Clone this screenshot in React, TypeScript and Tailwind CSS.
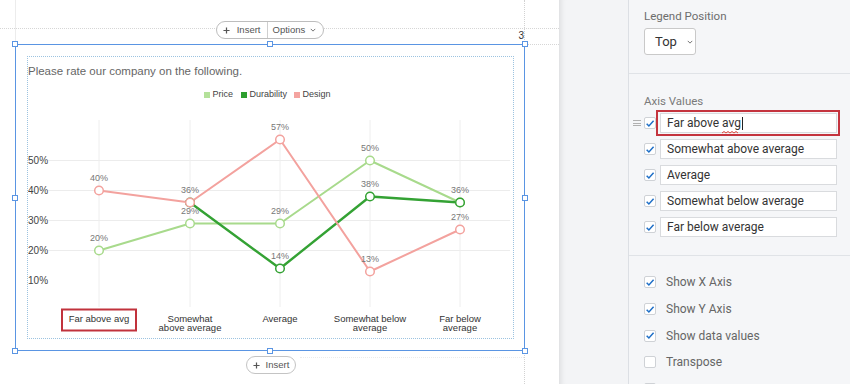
import * as React from "react";

// kolory serii
const PRICE = "#a8da8c";
const DUR = "#34a234";
const DESIGN = "#f3a29e";

const XS = [99, 190, 280, 370, 460];
const yOf = (v: number) => 310.5 - 3 * v;

const SERIES: { color: string; width: number; values: (number | null)[] }[] = [
  { color: PRICE, width: 2, values: [20, 29, 29, 50, 36] },
  { color: DUR, width: 2.4, values: [null, 36, 14, 38, 36] },
  { color: DESIGN, width: 2, values: [40, 36, 57, 13, 27] },
];

const LABELS: [number, number][] = [
  [99, 40], [99, 20],
  [190, 36], [190, 29],
  [280, 57], [280, 29], [280, 14],
  [370, 50], [370, 38], [370, 13],
  [460, 36], [460, 27],
];

const XLAB: string[][] = [
  ["Far above avg"],
  ["Somewhat", "above average"],
  ["Average"],
  ["Somewhat below", "average"],
  ["Far below", "average"],
];

function Chart() {
  return (
    <svg width={485} height={232} viewBox="28 105 485 232" className="block">
      {/* siatka */}
      {[50, 40, 30, 20].map((v) => (
        <line key={v} x1={48} x2={510} y1={yOf(v)} y2={yOf(v)} stroke="#ececec" strokeWidth={1} />
      ))}
      {XS.map((x) => (
        <line key={x} x1={x} x2={x} y1={120} y2={307} stroke="#eeeeee" strokeWidth={1} />
      ))}
      {[50, 40, 30, 20, 10].map((v) => (
        <text key={v} x={28} y={yOf(v)} fontSize={10} fill="#444" dominantBaseline="central">
          {v}%
        </text>
      ))}

      {/* linie */}
      {SERIES.map((s, i) => {
        const pts = s.values
          .map((v, j) => (v == null ? null : `${XS[j]},${yOf(v)}`))
          .filter(Boolean)
          .join(" ");
        return <polyline key={i} points={pts} fill="none" stroke={s.color} strokeWidth={s.width} strokeLinejoin="round" />;
      })}
      {SERIES.map((s, i) =>
        s.values.map((v, j) =>
          v == null ? null : (
            <circle key={`${i}-${j}`} cx={XS[j]} cy={yOf(v)} r={4.3} fill="#fff" stroke={s.color} strokeWidth={1.5} />
          )
        )
      )}

      {/* wartości */}
      {LABELS.map(([x, v], i) => (
        <text key={i} x={x} y={yOf(v) - 12.5} fontSize={9} fill="#777" textAnchor="middle" dominantBaseline="central">
          {v}%
        </text>
      ))}

      {/* etykiety osi X */}
      {XLAB.map((lines, i) =>
        lines.map((t, k) => (
          <text key={`${i}-${k}`} x={XS[i]} y={318.3 + k * 9.6} fontSize={9.5} fill="#333" textAnchor="middle" dominantBaseline="central">
            {t}
          </text>
        ))
      )}
      <rect x={62} y={309.5} width={74} height={21} fill="none" stroke="#c1323c" strokeWidth={2} />
    </svg>
  );
}

function Plus() {
  return (
    <svg viewBox="0 0 8 8" className="h-[7px] w-[7px]" fill="none" stroke="#555" strokeWidth="1.4">
      <path d="M4 0.5v7M0.5 4h7" />
    </svg>
  );
}

function Chevron({ className = "h-[4px] w-[6px]" }: { className?: string }) {
  return (
    <svg viewBox="0 0 8 5" className={className} fill="none" stroke="#666" strokeWidth="1.2">
      <path d="M1 1l3 3 3-3" />
    </svg>
  );
}

function Handle({ className }: { className: string }) {
  return <span className={["absolute h-[6px] w-[6px] border border-[#5a95e3] bg-white", className].join(" ")} />;
}

function Box({ checked }: { checked: boolean }) {
  return (
    <span className="flex h-[12px] w-[12px] shrink-0 items-center justify-center rounded-[2px] border border-[#cfd2d6] bg-white">
      {checked && (
        <svg viewBox="0 0 12 12" className="h-[11px] w-[11px]">
          <path d="M2 6.2 4.7 8.9 10.3 2.8" fill="none" stroke="#1f6fc7" strokeWidth="1.8" />
        </svg>
      )}
    </span>
  );
}

const AXIS = ["Far above avg", "Somewhat above average", "Average", "Somewhat below average", "Far below average"];
const OPTS: { label: string; on: boolean }[] = [
  { label: "Show X Axis", on: true },
  { label: "Show Y Axis", on: true },
  { label: "Show data values", on: true },
  { label: "Transpose", on: false },
  { label: "", on: false },
];

export default function App() {
  return (
    <div className="flex h-[384px] w-[850px] overflow-hidden bg-white">
      {/* płótno edytora */}
      <div className="relative h-full w-[559px] shrink-0 bg-white font-['Liberation_Sans',Arial,sans-serif]">
        <div className="absolute left-0 right-0 top-[28px] border-t border-dotted border-[#d6d6d6]" />
        <div className="absolute left-[15px] top-0 h-[44px] border-l border-[#ececec]" />
        <div className="absolute bottom-0 left-[524px] top-0 border-l border-dotted border-[#d2d2d2]" />
        <div className="absolute left-[525px] right-0 top-[44px] border-t border-dotted border-[#d6d6d6]" />
        <div className="absolute left-[300px] right-[35px] top-[357px] border-t border-dotted border-[#ececec]" />

        <div className="relative ml-[15px] w-[510px]">
          <div className="flex h-[44px] justify-center pt-[21px]">
            <div className="flex h-[18px] items-center rounded-full border border-[#bdbdbd] bg-white text-[9.5px] text-[#555]">
              <span className="flex h-full items-center gap-[7px] pl-[6px] pr-[6px]">
                <Plus />
                Insert
              </span>
              <span className="h-full w-px bg-[#cfcfcf]" />
              <span className="flex h-full items-center gap-[5px] pl-[5px] pr-[7px]">
                Options
                <Chevron />
              </span>
            </div>
          </div>

          <div className="relative h-[307px] border border-[#5a95e3]">
            <Handle className="-left-[4px] -top-[4px]" />
            <Handle className="left-[251px] -top-[4px]" />
            <Handle className="-right-[4px] -top-[4px]" />
            <Handle className="-left-[4px] top-[150px]" />
            <Handle className="-right-[4px] top-[150px]" />
            <Handle className="-bottom-[4px] -left-[4px]" />
            <Handle className="-bottom-[4px] left-[251px]" />
            <Handle className="-bottom-[4px] -right-[4px]" />
            <span className="absolute -top-[14px] right-0 text-[10px] leading-[10px] text-[#333]">3</span>

            <div className="ml-[11px] mt-[11px] flex h-[283px] w-[487px] flex-col border border-dotted border-[#9cc3e0]">
              <div className="mt-[6px] text-[11.5px] leading-[16px] text-[#666]">Please rate our company on the following.</div>
              <div className="mt-[10px] flex h-[12px] items-center pl-[176px] text-[9px] text-[#444]">
                <span className="h-[6px] w-[6px] bg-[#b4e19a]" />
                <span className="ml-[2.5px]">Price</span>
                <span className="ml-[8px] h-[6px] w-[6px] bg-[#2e9e2e]" />
                <span className="ml-[2.5px]">Durability</span>
                <span className="ml-[7px] h-[6px] w-[6px] bg-[#f4a4a0]" />
                <span className="ml-[2.5px]">Design</span>
              </div>
              <div className="mt-[4px]">
                <Chart />
              </div>
            </div>
          </div>

          <div className="flex justify-center pt-[5px]">
            <div className="ml-[2px] flex h-[18px] items-center gap-[6px] rounded-full border border-[#c4c4c4] bg-white pl-[6px] pr-[6px] text-[9.5px] text-[#555]">
              <Plus />
              Insert
            </div>
          </div>
        </div>
      </div>

      {/* szary pas */}
      <div className="h-full w-[69px] shrink-0 bg-[#f3f4f6] shadow-[inset_7px_0_6px_-6px_rgba(0,0,0,0.12)]" />

      {/* panel ustawień */}
      <div className="h-full w-[222px] shrink-0 border-l border-[#dcdfe4] bg-[#f5f6f8] font-['Roboto',sans-serif]">
        <div className="h-[74px] border-b border-[#e0e3e7] pl-[15px] pt-[9px]">
          <div className="text-[11.5px] leading-[14px] text-[#6d6d6d]">Legend Position</div>
          <div className="mt-[5px] flex h-[27px] w-[52px] items-center gap-[10px] rounded-[3px] border border-[#c9c9c9] bg-white pl-[10px] text-[13px] text-[#333]">
            Top
            <Chevron />
          </div>
        </div>

        <div className="h-[182px] border-b border-[#e0e3e7] pl-[15px] pt-[20px]">
          <div className="text-[11.5px] leading-[14px] text-[#7a7a7a]">Axis Values</div>
          <div className="mt-[5px] flex flex-col gap-[6px]">
            {AXIS.map((a, i) => (
              <div key={a} className="relative flex h-[20px] items-center gap-[4px]">
                {i === 0 && (
                  <span className="absolute -left-[11px] top-[7px] flex w-[8px] flex-col gap-[1.5px]">
                    <span className="h-px bg-[#b0b0b0]" />
                    <span className="h-px bg-[#b0b0b0]" />
                    <span className="h-px bg-[#b0b0b0]" />
                  </span>
                )}
                <Box checked />
                <div className="relative flex h-full w-[177px] items-center border border-[#d9dbde] bg-white pl-[6px] text-[12px] text-[#333]">
                  {i === 0 ? (
                    <>
                      <span className="whitespace-pre">Far above </span>
                      <span className="relative">
                        avg
                        <svg viewBox="0 0 16 3" className="absolute -bottom-[2px] left-0 h-[3px] w-[16px]" fill="none" stroke="#e0463c" strokeWidth="1">
                          <path d="M0 2l2-1.5 2 1.5 2-1.5 2 1.5 2-1.5 2 1.5 2-1.5 2 1.5" />
                        </svg>
                      </span>
                      <span className="ml-[1px] h-[13px] w-px bg-[#222]" />
                      <span className="pointer-events-none absolute -bottom-[4px] -left-[5px] -right-[4px] -top-[4px] border-2 border-[#c4343e]" />
                    </>
                  ) : (
                    a
                  )}
                </div>
              </div>
            ))}
          </div>
        </div>

        <div className="pl-[15px] pt-[13px]">
          {OPTS.map((o, i) => (
            <div key={i} className="flex h-[26.7px] items-center gap-[10px] text-[12px] text-[#666]">
              <Box checked={o.on} />
              {o.label}
            </div>
          ))}
        </div>
      </div>
    </div>
  );
}
